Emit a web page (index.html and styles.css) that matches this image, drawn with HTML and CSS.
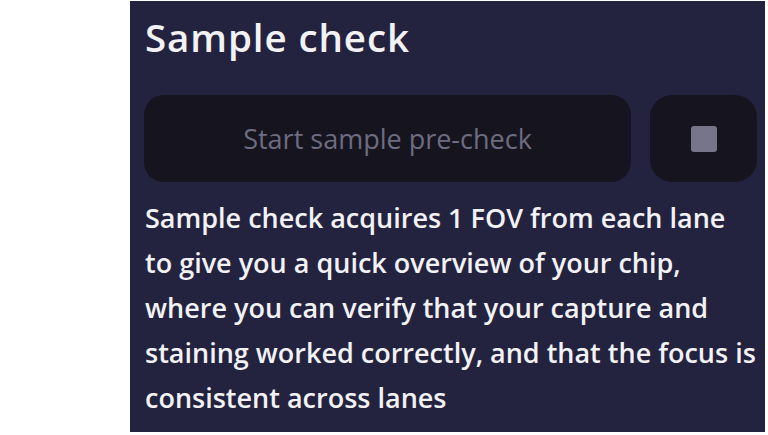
FILE: index.html
```
<!DOCTYPE html>
<html>
<head>
<meta charset="utf-8">
<link rel="stylesheet" href="styles.css">
</head>
<body>
<div class="panel">
  <h1 class="title">Sample check</h1>
  <div class="actions">
    <button class="btn-start">Start sample pre-check</button>
    <button class="btn-stop"><span class="stop-icon"></span></button>
  </div>
  <p class="desc">Sample check acquires 1 FOV from each lane<br>to give you a quick overview of your chip,<br>where you can verify that your capture and<br>staining worked correctly, and that the focus is<br>consistent across lanes</p>
</div>
</body>
</html>
```
FILE: styles.css
```
html, body {
  margin: 0;
  padding: 0;
  background: #ffffff;
}
.panel {
  margin: 1px 0 0 130px;
  width: 635px;
  height: 431px;
  box-sizing: border-box;
  background: #24233f;
  padding: 10px 4px 0 14px;
  font-family: "Open Sans", sans-serif;
  color: #f2f2f5;
}
.title {
  margin: 0;
  font-size: 38.5px;
  font-weight: 600;
  letter-spacing: 0.9px;
  line-height: 52px;
  padding-left: 1px;
}
.actions {
  display: flex;
  gap: 19px;
  margin-top: 32px;
}
.btn-start {
  flex: 0 0 487px;
  height: 87px;
  border: none;
  border-radius: 20px;
  background: #15141f;
  color: #6e6c80;
  font-family: "Open Sans", sans-serif;
  font-size: 27px;
  padding: 0;
}
.btn-stop {
  flex: 0 0 107px;
  height: 87px;
  border: none;
  border-radius: 22px;
  background: #15141f;
  display: flex;
  align-items: center;
  justify-content: center;
  padding: 0;
}
.stop-icon {
  width: 26px;
  height: 26px;
  border-radius: 3px;
  background: #77758a;
}
.desc {
  margin: 13px 0 0 1px;
  font-size: 27px;
  line-height: 45px;
  font-weight: 600;
  white-space: nowrap;
}
```
